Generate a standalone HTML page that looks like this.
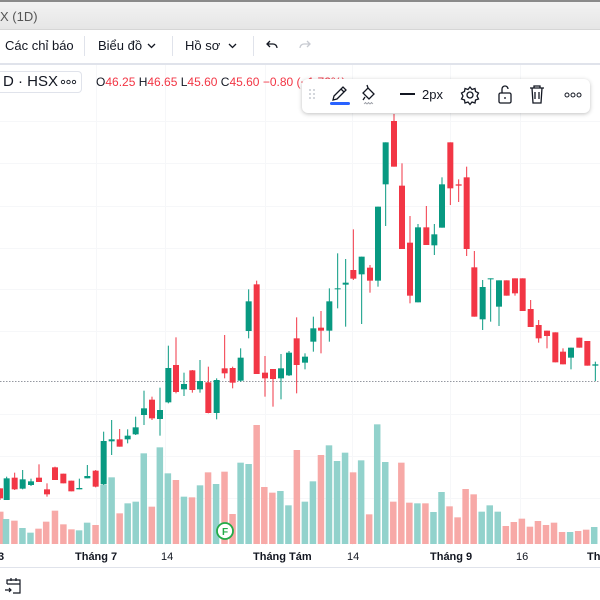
<!DOCTYPE html>
<html><head><meta charset="utf-8"><style>
*{margin:0;padding:0;box-sizing:border-box}
body{width:600px;height:600px;overflow:hidden;background:#fff;font-family:"Liberation Sans",sans-serif;color:#131722;position:relative}
.t{position:absolute;white-space:nowrap}
</style></head><body>
<div style="position:absolute;left:0;top:0;width:600px;height:30px;background:linear-gradient(#f2f2f2,#e6e6e6);border-top:2px solid #8a8a8a;border-bottom:1px solid #d6d6d6"></div>
<div class="t" style="left:0;top:9px;font-size:13px;color:#555">X (1D)</div>
<div style="position:absolute;left:0;top:63px;width:600px;height:2px;background:#e0e3eb"></div>
<div class="t" style="left:5px;top:38px;font-size:13px">Các chỉ báo</div>
<div style="position:absolute;left:84px;top:36px;width:1px;height:20px;background:#e0e3eb"></div>
<div class="t" style="left:98px;top:38px;font-size:13px">Biểu đồ</div>
<svg style="position:absolute;left:147px;top:43px" width="9" height="6"><path d="M1 1l3.5 3.5L8 1" stroke="#131722" stroke-width="1.3" fill="none"/></svg>
<div style="position:absolute;left:172px;top:36px;width:1px;height:20px;background:#e0e3eb"></div>
<div class="t" style="left:185px;top:38px;font-size:13px">Hồ sơ</div>
<svg style="position:absolute;left:228px;top:43px" width="9" height="6"><path d="M1 1l3.5 3.5L8 1" stroke="#131722" stroke-width="1.3" fill="none"/></svg>
<div style="position:absolute;left:253px;top:36px;width:1px;height:20px;background:#e0e3eb"></div>
<svg style="position:absolute;left:265px;top:39px" width="14" height="12"><path d="M5 2L2 5l3 3M2 5h6c2.5 0 4 2 4 4" stroke="#131722" stroke-width="1.3" fill="none"/></svg>
<svg style="position:absolute;left:298px;top:39px" width="14" height="12"><path d="M9 2l3 3-3 3M12 5H6C3.5 5 2 7 2 9" stroke="#c7cad1" stroke-width="1.3" fill="none"/></svg>

<svg id="ch" style="position:absolute;left:0;top:65px" width="600" height="503"></svg>

<div style="position:absolute;left:0;top:71px;width:82px;height:22px;border:1px solid #e0e3eb;border-left:none;border-radius:0 4px 4px 0;background:#fff"></div>
<div class="t" style="left:3px;top:73px;font-size:15px">D · HSX</div>
<svg style="position:absolute;left:60px;top:78px" width="18" height="8"><g fill="none" stroke="#131722" stroke-width="0.9"><circle cx="3" cy="4" r="1.7"/><circle cx="8.5" cy="4" r="1.7"/><circle cx="14" cy="4" r="1.7"/></g></svg>
<div class="t" style="left:96px;top:75px;font-size:12px;color:#131722">O<span style="color:#f23645">46.25</span> H<span style="color:#f23645">46.65</span> L<span style="color:#f23645">45.60</span> C<span style="color:#f23645">45.60</span> <span style="color:#f23645">−0.80 (−1.72%)</span></div>

<div style="position:absolute;left:302px;top:79px;width:288px;height:34px;background:#fff;border-radius:6px;box-shadow:0 1px 4px rgba(0,0,0,.25)"></div>
<svg style="position:absolute;left:302px;top:79px" width="288" height="34">
<g fill="#c7cad1"><circle cx="8" cy="11" r="1"/><circle cx="12" cy="11" r="1"/><circle cx="8" cy="15" r="1"/><circle cx="12" cy="15" r="1"/><circle cx="8" cy="19" r="1"/><circle cx="12" cy="19" r="1"/></g>
<path d="M31 21l1-4 9-9 3 3-9 9z M39 10l3 3" stroke="#131722" stroke-width="1.3" fill="none"/>
<rect x="28" y="23" width="20" height="3" rx="1.5" fill="#2962ff"/>
<path d="M66 9l6 6-5 5-6-6z M66 9l-1-3 M63 18l-2 3" stroke="#131722" stroke-width="1.3" fill="none"/>
<path d="M62 25l1.5-1.5 1.5 1.5 1.5-1.5 1.5 1.5 1.5-1.5 1.5 1.5" stroke="#9598a1" stroke-width="0.8" fill="none"/>
<rect x="98" y="14" width="15" height="2" fill="#131722"/>
<text x="120" y="20" font-size="13" fill="#131722" font-family="Liberation Sans">2px</text>
<g transform="translate(168,16)" stroke="#131722" stroke-width="1.3" fill="none"><circle r="3"/><path d="M0-8l2 2.5 3-1 .5 3 3 1.5-1.5 3 1.5 3-3 1-.5 3-3-1-2 2.5-2-2.5-3 1-.5-3-3-1 1.5-3-1.5-3 3-1.5.5-3 3 1z"/></g>
<g stroke="#131722" stroke-width="1.3" fill="none"><rect x="197" y="14" width="12" height="10" rx="1.5"/><path d="M200 14v-4a3 3 0 0 1 6 0"/><path d="M203 18v2"/></g>
<g stroke="#131722" stroke-width="1.3" fill="none"><path d="M228 9h14M232 9V7h6v2M230 9l1 15h8l1-15M233 13v7M237 13v7"/></g>
<g fill="none" stroke="#131722" stroke-width="1"><circle cx="265" cy="16" r="2"/><circle cx="271" cy="16" r="2"/><circle cx="277" cy="16" r="2"/></g>
</svg>

<div style="position:absolute;left:0;top:567px;width:600px;height:1px;background:#e0e3eb"></div>
<div class="t" style="left:-2px;top:551px;font-size:11px;font-weight:bold">3</div>
<div class="t" style="left:75px;top:551px;font-size:11px;font-weight:bold">Tháng 7</div>
<div class="t" style="left:161px;top:551px;font-size:11px">14</div>
<div class="t" style="left:253px;top:551px;font-size:11px;font-weight:bold">Tháng Tám</div>
<div class="t" style="left:347px;top:551px;font-size:11px">14</div>
<div class="t" style="left:430px;top:551px;font-size:11px;font-weight:bold">Tháng 9</div>
<div class="t" style="left:516px;top:551px;font-size:11px">16</div>
<div class="t" style="left:587px;top:551px;font-size:11px;font-weight:bold">Th</div>
<svg style="position:absolute;left:3px;top:576px" width="20" height="20"><g stroke="#131722" stroke-width="1.2" fill="none"><path d="M4 8V4h13v13H10M4 8h13M8 2v3M13 2v3M2 14h6M6 12l2 2-2 2"/></g></svg>

<script>
var s=document.getElementById('ch'),h='',O=65;
function R(x,y,w,hh,c){h+='<rect x="'+x+'" y="'+(y-O)+'" width="'+w+'" height="'+Math.max(hh,1)+'" fill="'+c+'"/>';}
[96,165,265,352,450,520].forEach(function(x){R(x,65,1,480,'#f6f7f9');});
[121,163,206,248,289,331,414,456,498].forEach(function(y){R(0,y,600,1,'#f6f7f9');});
var v=[[0,335,0],[15,357,1],[37,362,0],[58,384,1],[79,398,1],[100,386,0],[120,365,0],[143,332,0],[165,373,0],[186,388,0],[206,391,1],[227,368,1],[249,375,0],[270,255,1],[291,232,1],[312,340,0],[333,310,1],[354,305,1],[375,160,1],[396,320,0],[417,142,1],[438,220,1],[459,240,0],[480,290,1],[501,292,0],[522,256,1],[543,217,0],[564,252,1],[586,215,0],[607,342,0],[628,188,1],[649,192,1],[670,75,0],[690,261,0],[711,278,0],[732,273,1],[753,316,1],[775,150,0],[796,305,1],[817,244,1],[838,165,0],[859,136,1],[880,183,1],[901,158,1],[922,217,0],[943,181,1],[964,343,0],[985,73,1],[1006,186,1],[1027,305,0],[1048,188,0],[1069,308,0],[1090,310,1],[1111,310,0],[1132,336,1],[1153,276,1],[1174,319,0],[1195,352,0],[1216,267,0],[1237,283,0],[1258,335,1],[1279,316,1],[1300,335,1],[1321,378,0],[1342,366,0],[1363,356,0],[1384,380,0],[1405,363,0],[1426,375,0],[1447,368,0],[1468,396,0],[1489,396,1],[1510,393,0],[1531,389,0],[1552,381,1]];
v.forEach(function(b){var x=b[0]/2.613,t=b[1]/3+400;R(x-3,t,6.5,544-t,b[2]?'#92d2cc':'#f7a9a7');});
for(var x=0;x<600;x+=3)R(x,381,1.5,1,'#9598a1');
var a=[[0,715,745,715,750,0],[20,685,750,680,750,1],[44,683,718,668,720,0],[68,688,716,660,718,1],[93,694,705,686,708,1],[117,683,696,643,696,0],[141,718,733,700,740,0],[165,652,690,650,690,0],[190,671,700,671,700,0],[214,692,724,692,724,0],[238,714,718,686,718,1],[262,678,685,645,685,1],[287,662,710,660,712,0],[311,573,703,545,705,1],[335,568,574,510,615,1],[359,568,590,537,590,0],[383,557,568,538,580,1],[407,532,553,500,555,1],[432,475,495,422,525,1],[456,449,505,440,510,0],[480,480,507,413,557,1],[505,354,457,287,460,1],[528,345,426,262,430,0],[552,402,418,368,438,1],[577,361,420,360,428,0],[600,393,418,330,428,1],[625,397,489,350,490,0],[650,390,489,385,508,1],[674,355,370,255,385,0],[698,354,398,350,415,0],[722,323,392,295,395,1],[746,154,243,118,265,1],[770,103,372,92,372,0],[795,368,385,318,440,0],[819,357,387,357,470,0],[843,355,385,312,448,1],[867,308,376,303,378,1],[890,265,345,202,430,0]];
var b=[[15,770,788,760,808,1],[40,685,725,650,755,1],[63,683,692,633,760,0],[88,604,692,565,725,1],[113,565,568,460,625,1],[137,548,554,477,680,1],[160,510,536,388,540,0],[185,470,523,470,672,1],[210,503,542,495,578,0],[234,320,542,320,560,1],[257,127,253,127,378,1],[282,63,200,42,200,0],[306,257,447,190,447,0],[330,428,587,348,610,0],[354,382,607,372,607,1],[379,382,435,318,435,0],[403,403,436,372,465,1],[426,253,383,232,383,1],[451,127,265,127,315,0],[476,253,257,238,306,0],[500,232,447,200,468,0],[523,502,650,453,650,0],[548,561,658,540,690,1],[572,535,538,535,665,1],[597,541,620,541,678,1],[620,541,587,541,587,0],[645,535,580,535,587,0],[668,535,633,535,633,0],[692,627,681,600,681,0],[716,675,715,660,728,0],[741,692,708,692,745,0],[766,697,787,697,787,0],[789,755,793,745,793,0],[813,743,773,743,808,1],[838,713,743,713,743,0],[862,723,797,723,797,0],[886,793,797,785,843,1]];
function C(x,bt,bb,wt,wb,g){var c=g?'#089981':'#f23645';R(x-0.5,wt,1,wb-wt,c);R(x-3,bt,6,bb-bt,c);}
a.forEach(function(k){C(k[0]/3,k[1]/3+250,k[2]/3+250,k[3]/3+250,k[4]/3+250,k[5]);});
b.forEach(function(k){C(k[0]/3+300,k[1]/3+100,k[2]/3+100,k[3]/3+100,k[4]/3+100,k[5]);});
h+='<circle cx="225" cy="'+(531-O)+'" r="8" fill="#fff" stroke="#22ab48" stroke-width="1.8"/><text x="225" y="'+(535-O)+'" font-size="10" font-weight="bold" fill="#22ab48" text-anchor="middle" font-family="Liberation Sans">F</text>';
s.innerHTML=h;
</script>
</body></html>
